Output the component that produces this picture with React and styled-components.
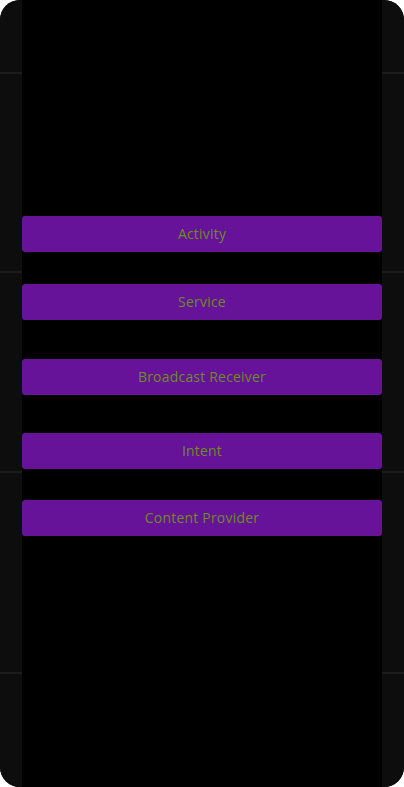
import React from 'react'
import styled, { createGlobalStyle } from 'styled-components'

const GlobalStyle = createGlobalStyle`
    html, body {
        margin: 0;
        padding: 0;
        background: #fff;
    }
    body {
        font-family: "Open Sans", "Liberation Sans", sans-serif;
    }
`;

const Phone = styled.div`
    width: 404px;
    height: 787px;
    border-radius: 20px;
    overflow: hidden;
    display: grid;
    grid-template-columns: 22px 1fr 22px;
    background: #000;
`;

const Rail = styled.div`
    background: #0d0d0d;
    display: flex;
    flex-direction: column;
`;

const RailSegment = styled.div`
    height: ${props => props.h}px;
    border-bottom: 2px solid #1c1c1c;
    flex-shrink: 0;
`;

const Screen = styled.div`
    background: #000;
    display: flex;
    flex-direction: column;
    padding-top: 216px;
`;

const MenuButton = styled.button`
    height: 36px;
    margin-top: ${props => props.gap || 0}px;
    border: none;
    border-radius: 3px;
    background: #661299;
    color: #6b8e23;
    font-family: "Open Sans", "Liberation Sans", sans-serif;
    font-size: 14px;
    letter-spacing: 0.2px;
    padding: 0 0 2px 0;
    cursor: pointer;
`;

const items = [
    { label: 'Activity', gap: 0 },
    { label: 'Service', gap: 32 },
    { label: 'Broadcast Receiver', gap: 39 },
    { label: 'Intent', gap: 38 },
    { label: 'Content Provider', gap: 31 },
]

const SideRail = () => (
    <Rail>
        <RailSegment h={72} />
        <RailSegment h={197} />
        <RailSegment h={198} />
        <RailSegment h={199} />
    </Rail>
)

const App = () => {
    return (
        <>
            <GlobalStyle />
            <Phone>
                <SideRail />
                <Screen>
                    {items.map((item, index) => (
                        <MenuButton key={index} gap={item.gap}>{item.label}</MenuButton>
                    ))}
                </Screen>
                <SideRail />
            </Phone>
        </>
    )
}

export default App
